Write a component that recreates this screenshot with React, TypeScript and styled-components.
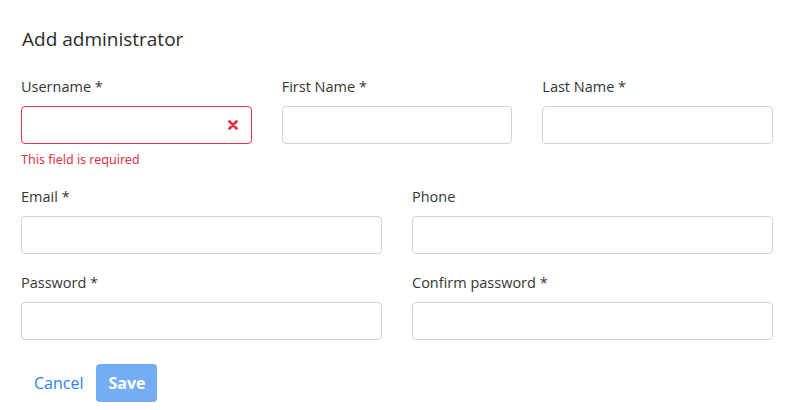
import styled, {createGlobalStyle} from 'styled-components';

const GlobalStyle = createGlobalStyle`
   html, body {
      margin: 0;
      padding: 0;
      background: #fff;
   }
   * {
      box-sizing: border-box;
   }
`;

const Page = styled.div`
   width: 796px;
   height: 410px;
   padding: 26px 23px 0 21px;
   font-family: 'Open Sans', 'Lato', sans-serif;
   color: #333;
   overflow: hidden;
`;

const Title = styled.h1`
   margin: 0 0 25px 1px;
   font-family: 'Open Sans', sans-serif;
   font-size: 19px;
   font-weight: 400;
   line-height: 26px;
   color: #2b2b2b;
`;

const Row = styled.div<{cols: number}>`
   display: grid;
   grid-template-columns: repeat(${(p) => p.cols}, 1fr);
   column-gap: 30px;
   margin-bottom: 19px;
`;

const Field = styled.div`
   display: flex;
   flex-direction: column;
`;

const Label = styled.label`
   font-size: 14.5px;
   line-height: 20px;
   color: #353535;
   margin-bottom: 9px;
`;

const InputWrap = styled.div`
   position: relative;
`;

const Input = styled.input<{invalid?: boolean}>`
   width: 100%;
   height: 38px;
   border: 1px solid ${(p) => (p.invalid ? '#dc3545' : '#ced4da')};
   border-radius: 4px;
   padding: 6px 12px;
   font-size: 15px;
   outline: none;
   background: #fff;
`;

const ErrorIcon = styled.svg`
   position: absolute;
   right: 14px;
   top: 14px;
   width: 10px;
   height: 10px;
`;

const ErrorText = styled.div`
   margin-top: 7px;
   font-family: 'Noto Sans', sans-serif;
   font-size: 12.5px;
   line-height: 17px;
   color: #dc3545;
`;

const Actions = styled.div`
   display: flex;
   align-items: center;
   gap: 13px;
   margin-top: 24px;
   padding-left: 13px;
`;

const LinkButton = styled.button`
   border: none;
   background: none;
   padding: 0;
   font-family: inherit;
   font-size: 16px;
   color: #2f80ed;
   cursor: pointer;
`;

const PrimaryButton = styled.button`
   width: 61px;
   height: 38px;
   border: none;
   border-radius: 4px;
   background: #74adf3;
   color: #fff;
   font-family: inherit;
   font-size: 16px;
   font-weight: 700;
   cursor: default;
`;

function FormField({label, invalid, error}: {label: string; invalid?: boolean; error?: string}) {
   return (
      <Field>
         <Label>{label}</Label>
         <InputWrap>
            <Input invalid={invalid} />
            {invalid && (
               <ErrorIcon viewBox='0 0 10 10'>
                  <path d='M1.5 1.5 L8.5 8.5 M8.5 1.5 L1.5 8.5' stroke='#dc3545' strokeWidth='2.8' strokeLinecap='round' />
               </ErrorIcon>
            )}
         </InputWrap>
         {error && <ErrorText>{error}</ErrorText>}
      </Field>
   );
}

export default function App() {
   return (
      <>
         <GlobalStyle />
         <Page>
            <Title>Add administrator</Title>
            <Row cols={3}>
               <FormField label='Username *' invalid error='This field is required' />
               <FormField label='First Name *' />
               <FormField label='Last Name *' />
            </Row>
            <Row cols={2}>
               <FormField label='Email *' />
               <FormField label='Phone' />
            </Row>
            <Row cols={2}>
               <FormField label='Password *' />
               <FormField label='Confirm password *' />
            </Row>
            <Actions>
               <LinkButton>Cancel</LinkButton>
               <PrimaryButton>Save</PrimaryButton>
            </Actions>
         </Page>
      </>
   );
}
